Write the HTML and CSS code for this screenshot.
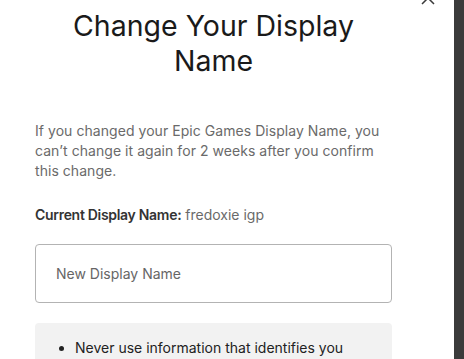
FILE: index.html
```html
<!DOCTYPE html>
<html>
<head>
<meta charset="utf-8">
<link rel="stylesheet" href="styles.css">
</head>
<body>
<div class="page">
  <div class="modal">
    <button class="close" aria-label="Close">
      <svg width="16" height="16" viewBox="0 0 16 16"><path d="M2 2 L14 14 M14 2 L2 14" stroke="#3a3a3a" stroke-width="1.5" fill="none"/></svg>
    </button>
    <div class="content">
      <h1 class="title">Change Your Display Name</h1>
      <p class="desc">If you changed your Epic Games Display Name, you can’t change it again for 2 weeks after you confirm this change.</p>
      <p class="current"><strong>Current Display Name:</strong> fredoxie igp</p>
      <div class="field"><span class="placeholder">New Display Name</span></div>
      <div class="rules">
        <ul>
          <li>Never use information that identifies you</li>
        </ul>
      </div>
    </div>
  </div>
  <div class="backdrop"></div>
</div>
</body>
</html>
```
FILE: styles.css
```css
html, body {
  margin: 0;
  padding: 0;
  height: 100%;
  overflow: hidden;
  background: #fff;
}
.page {
  display: flex;
  height: 100%;
  font-family: "Inter", "Liberation Sans", sans-serif;
}
.modal {
  position: relative;
  width: 454px;
  flex: none;
  background: #fff;
}
.close {
  position: absolute;
  left: 420px;
  top: -10px;
  border: 0;
  background: none;
  padding: 0;
  width: 16px;
  height: 16px;
}
.content {
  width: 357px;
  padding-left: 35px;
}
.title {
  margin: 8px 0 0;
  font-size: 28.5px;
  line-height: 35px;
  font-weight: 400;
  color: #1a1a1a;
  text-align: center;
  padding: 0 20px;
}
.desc {
  margin: 43px 0 0;
  font-size: 14px;
  line-height: 20px;
  color: #6a6a6a;
  letter-spacing: 0.05px;
}
.current {
  margin: 24px 0 0;
  font-size: 14px;
  line-height: 20px;
  color: #6a6a6a;
}
.current strong {
  color: #333;
  font-weight: 600;
  letter-spacing: -0.3px;
}
.field {
  margin-top: 19px;
  height: 57px;
  border: 1px solid #b3b3b3;
  border-radius: 4px;
  display: flex;
  align-items: center;
  padding-left: 20px;
}
.placeholder {
  font-size: 14px;
  color: #666;
}
.rules {
  margin-top: 20px;
  background: #f2f2f2;
  border-radius: 4px;
  padding: 15px 0 20px;
}
.rules ul {
  margin: 0;
  padding-left: 40px;
  font-size: 14px;
  line-height: 20px;
  color: #222;
}
.backdrop {
  flex: 1;
  background: #3b3b3b;
}
```
